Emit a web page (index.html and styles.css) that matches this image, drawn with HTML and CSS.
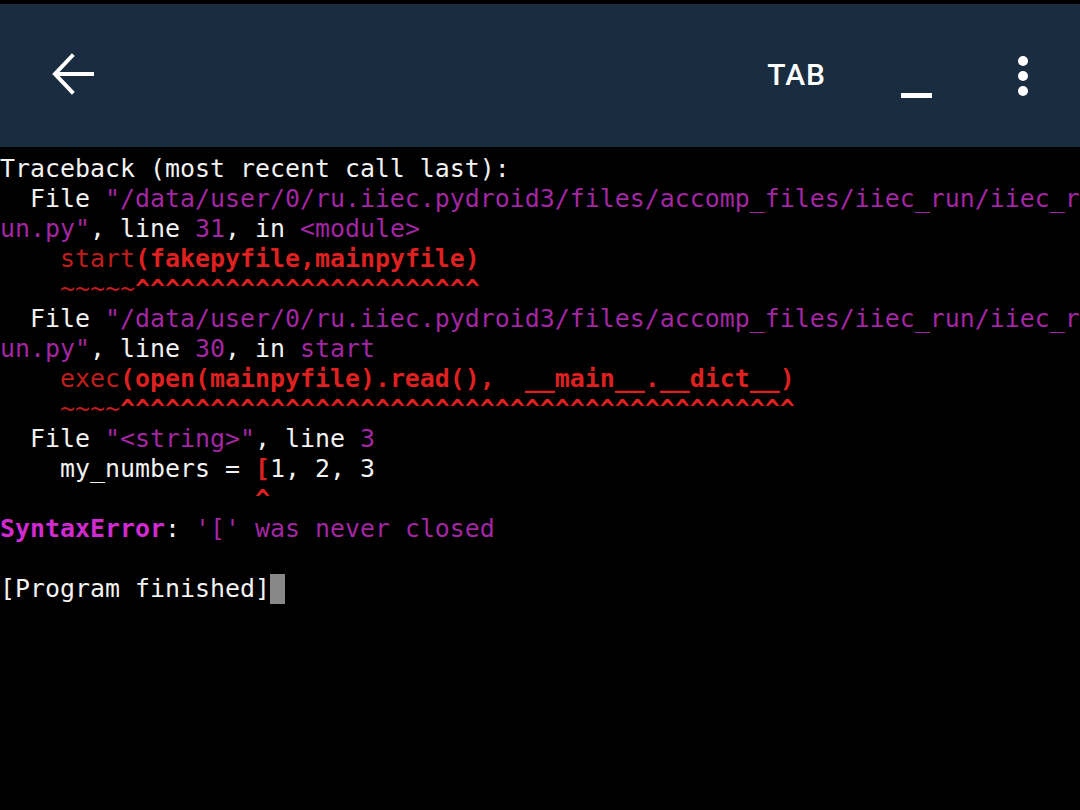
FILE: index.html
```html
<!DOCTYPE html>
<html>
<head>
<meta charset="utf-8">
<link rel="stylesheet" href="styles.css">
</head>
<body>
<header class="bar">
  <button class="icon back" aria-label="Back">
    <svg width="44" height="44" viewBox="0 0 44 44"><path d="M42 22H6M22 4L5 22l17 18" fill="none" stroke="#fff" stroke-width="4" stroke-linecap="square" stroke-linejoin="miter"/></svg>
  </button>
  <div class="spacer"></div>
  <span class="tab">TAB</span>
  <span class="under"></span>
  <span class="dots"><i></i><i></i><i></i></span>
</header>
<pre class="term"><span class="w">Traceback (most recent call last):</span>
<span class="w">  File </span><span class="m">"/data/user/0/ru.iiec.pydroid3/files/accomp_files/iiec_run/iiec_r</span>
<span class="m">un.py"</span><span class="w">, line </span><span class="m">31</span><span class="w">, in </span><span class="m">&lt;module&gt;</span>
<span class="r">    start</span><span class="rb">(fakepyfile,mainpyfile)</span>
<span class="r">    ~~~~~</span><span class="rb">^^^^^^^^^^^^^^^^^^^^^^^</span>
<span class="w">  File </span><span class="m">"/data/user/0/ru.iiec.pydroid3/files/accomp_files/iiec_run/iiec_r</span>
<span class="m">un.py"</span><span class="w">, line </span><span class="m">30</span><span class="w">, in </span><span class="m">start</span>
<span class="r">    exec</span><span class="rb">(open(mainpyfile).read(),  __main__.__dict__)</span>
<span class="r">    ~~~~</span><span class="rb">^^^^^^^^^^^^^^^^^^^^^^^^^^^^^^^^^^^^^^^^^^^^^</span>
<span class="w">  File </span><span class="m">"&lt;string&gt;"</span><span class="w">, line </span><span class="m">3</span>
<span class="w">    my_numbers = </span><span class="rb">[</span><span class="w">1, 2, 3</span>
<span class="rb">                 ^</span>
<span class="mb">SyntaxError</span><span class="w">: </span><span class="m">'[' was never closed</span>

<span class="w">[Program finished]</span><span class="cursor"> </span></pre>
</body>
</html>
```
FILE: styles.css
```css
html, body {
  margin: 0;
  padding: 0;
  background: #000;
  width: 1080px;
  height: 810px;
  overflow: hidden;
}
.bar {
  margin-top: 4px;
  height: 143px;
  background: #1a2c3f;
  display: flex;
  align-items: center;
  padding: 0 52px 0 50px;
  box-sizing: border-box;
}
.icon {
  background: none;
  border: 0;
  padding: 0;
  display: flex;
}
.back svg { display: block; margin-top: -4px; }
.spacer { flex: 1; }
.tab {
  font-family: Roboto, "Liberation Sans", sans-serif;
  font-weight: 500;
  font-size: 30px;
  letter-spacing: 1px;
  color: #fff;
  margin-top: -2px;
  margin-right: 75px;
}
.under {
  width: 31px;
  height: 5px;
  background: #fff;
  margin-top: 40px;
  margin-right: 86px;
}
.dots {
  display: flex;
  flex-direction: column;
  gap: 5px;
  margin-top: 0;
}
.dots i {
  width: 10px;
  height: 10px;
  border-radius: 50%;
  background: #fff;
  display: block;
}
.term {
  margin: 0;
  padding: 7px 0 0 0;
  font-family: "DejaVu Sans Mono", "Liberation Mono", monospace;
  font-size: 24.92px;
  line-height: 30px;
  white-space: pre;
  color: #f2f2f2;
}
.w { color: #f2f2f2; }
.m { color: #a326a3; }
.mb { color: #d02ad0; font-weight: bold; }
.r { color: #c21d1d; }
.rb { color: #df2020; font-weight: bold; }
.cursor {
  display: inline-block;
  width: 15px;
  height: 30px;
  background: #888;
  vertical-align: top;
}
```
